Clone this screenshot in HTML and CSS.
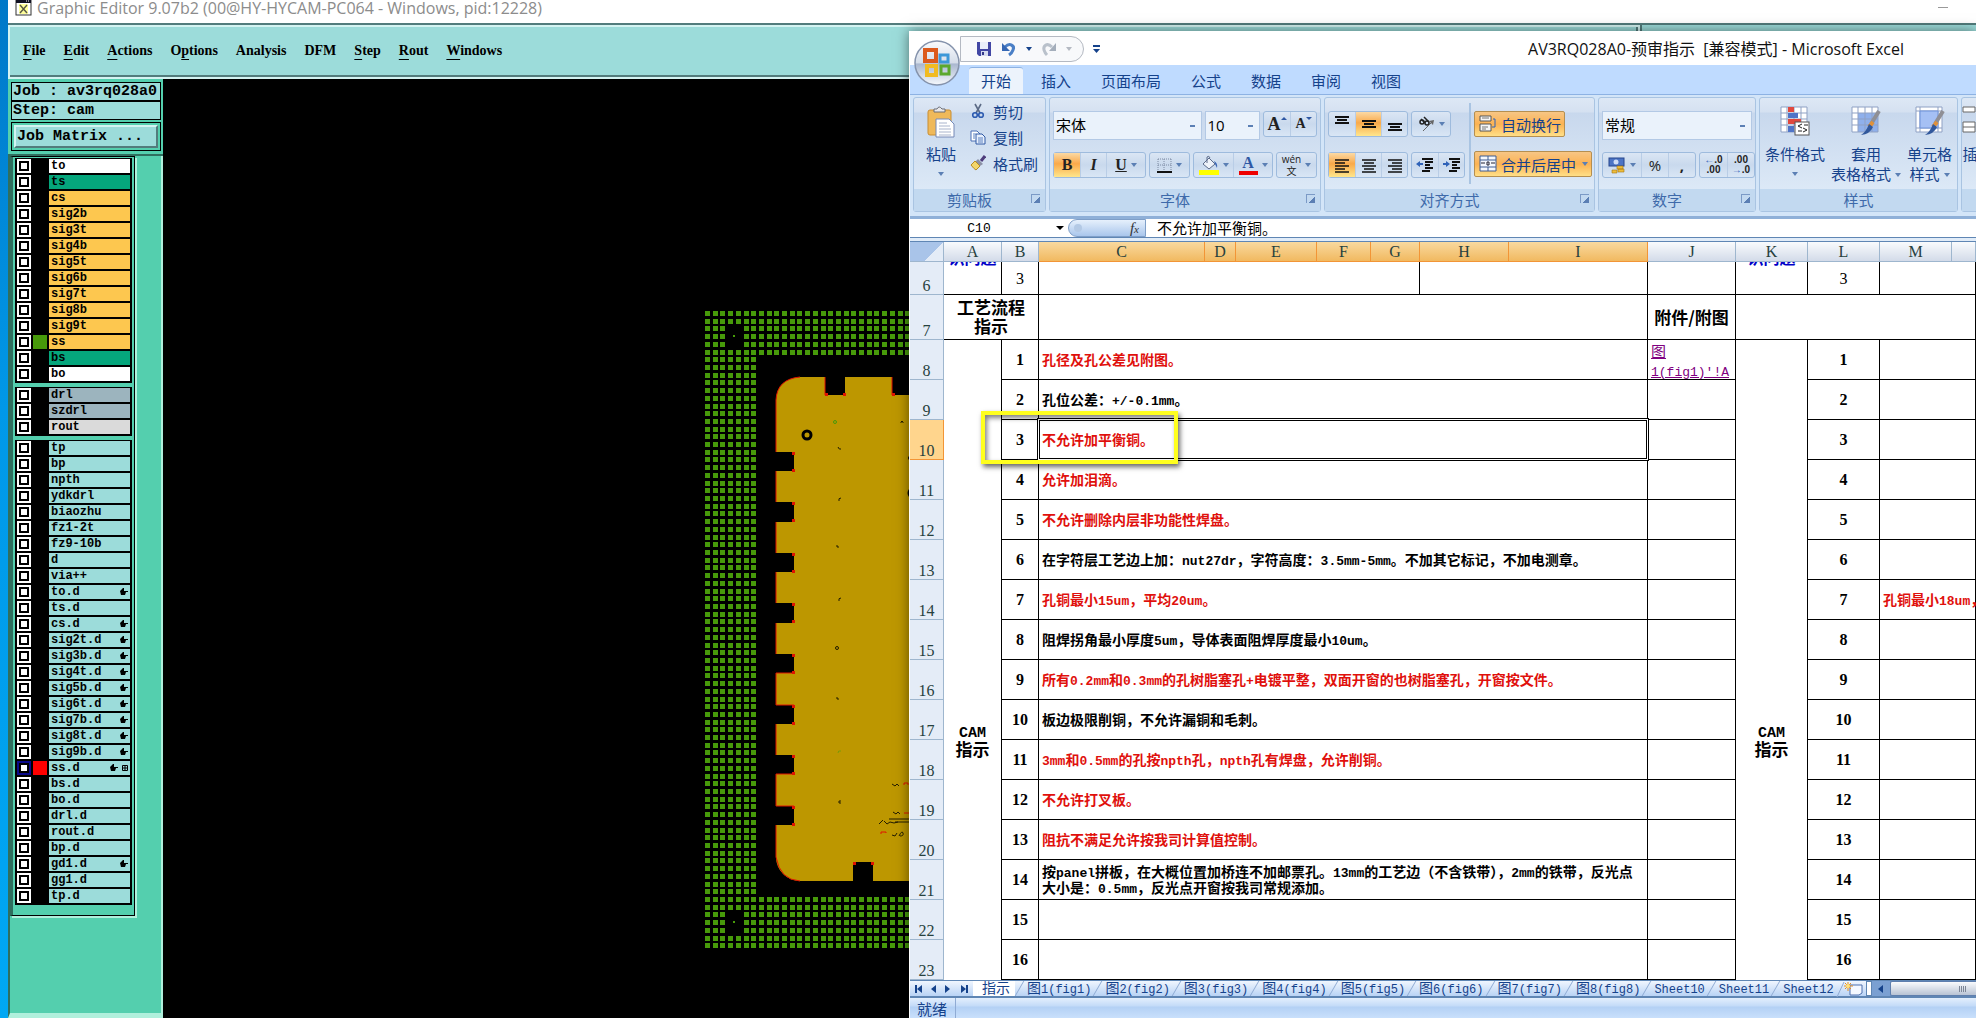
FILE: index.html
```html
<!DOCTYPE html>
<html lang="zh-CN">
<head>
  <meta charset="UTF-8" />
  <meta name="viewport" content="width=device-width, initial-scale=1.0"/>
  <title>Graphic Editor 9.07b2</title>
  <link rel="stylesheet" href="styles.css">
</head>
<body>
  <!-- Graphic editor window -->
  <div class="editor">
    <header class="editor-title">
      <svg width="17" height="16" viewBox="0 0 17 16"><rect x="1" y="0" width="15" height="15" fill="#fff" stroke="#333"/><rect x="1" y="0" width="15" height="3" fill="#112"/><path d="M11 1h1M13 1h1" stroke="#fff"/><rect x="4" y="4" width="9" height="10" fill="#ffff9c"/><path d="M5 5l7 8M12 5l-7 8" stroke="#554" stroke-width="1.4"/></svg>
      <h1>Graphic Editor 9.07b2 (00@HY-HYCAM-PC064 - Windows, pid:12228)</h1>
      <span class="minimize"></span>
    </header>
    <div class="menu-row">
      <nav class="menu">
        <a href="#"><u>F</u>ile</a>
        <a href="#"><u>E</u>dit</a>
        <a href="#"><u>A</u>ctions</a>
        <a href="#">O<u>p</u>tions</a>
        <a href="#">Analysis</a>
        <a href="#">DFM</a>
        <a href="#"><u>S</u>tep</a>
        <a href="#"><u>R</u>out</a>
        <a href="#"><u>W</u>indows</a>
      </nav>
      <div class="menu-side"></div>
    </div>
    <div class="editor-body">
      <aside class="side">
        <div class="job">
          <p>Job : av3rq028a0</p>
          <p>Step: cam</p>
          <div class="matrix-box"><button type="button">Job Matrix ...</button></div>
        </div>
        <div class="side-lower">
          <div class="layers" id="layers"></div>
        </div>
      </aside>
      <main class="canvas">
        <svg width="746" height="939" viewBox="163 79 746 939">
          <g id="pads" fill="#479a0a" shape-rendering="crispEdges"></g>
          <path fill="#bd9700" d="M800 377H825V395H845V377H892V395H909V881H873V862H853V881H800A24 24 0 0 1 776 857V825H794V806H776V774H794V755H776V724H794V705H776V673H794V654H776V623H794V603H776V572H794V553H776V522H794V502H776V471H794V452H776V400Q777 379 800 377Z"/>
          <path fill="none" stroke="#e01400" d="M800 377Q777 379 776 400V452M776 471V502M776 522V553M776 572V603M776 623V654M794 673H776V705H794M776 724V755M794 774H776V806H794M776 825V857Q780 880 800 881M825 377V395M892 377V395"/>
          <g id="corners" fill="#e01400"></g>
          <circle cx="807" cy="435" r="4" fill="#bd9700" stroke="#000" stroke-width="3"/>
          <g fill="none" stroke="#231d00">
            <path d="M901 423v-1q1-2 2 0v1M838 447q1 3 3 2M841 498q-3 0-2 3M836 546q3-1 2 2M841 598q-3 0-2 3M836 698q3-1 2 2M841 801q-3-1-2 2h2"/>
            <circle cx="835" cy="422" r="1.500" stroke="#479a0a"/>
            <circle cx="837" cy="648" r="1.500"/>
            <path d="M838 753q0-3 3-2" stroke="#7a9a0a"/>
            <path d="M892 784l3 2 2-2 2 2M893 812l3 2 2-2 2 2M879 824l4-4M884 821l3 3 3-2 4 1 4-1M889 819h20M895 822h14M892 835l3 1 2-3M899 836q3-6 4-3t-3 3"/>
            <path d="M904 785v-2h4v2M904 813h5M881 834v-2h5v1" stroke="#e01400"/>
          </g>
          <path d="M909 456q-2 2 0 4M909 489q-3 4 0 8" fill="#000"/>
        </svg>
      </main>
    </div>
  </div>

  <!-- Excel window -->
  <div class="excel">
    <button type="button" class="office" aria-label="Office">
      <svg width="46" height="46" viewBox="0 0 46 46">
        <defs><linearGradient id="orb" x1="0" y1="0" x2="0" y2="1"><stop offset="0" stop-color="#fafbfd"/><stop offset=".5" stop-color="#d5dde9"/><stop offset=".52" stop-color="#a9b7cf"/><stop offset="1" stop-color="#f6f9fd"/></linearGradient></defs>
        <circle cx="23" cy="23" r="22" fill="url(#orb)" stroke="#8593ac" stroke-width="1.500"/>
        <g fill="none" stroke-width="4">
          <rect x="11" y="10" width="11" height="11" stroke="#dc5a1d"/>
          <rect x="26" y="15" width="8" height="7" stroke="#3d98d8" stroke-width="3"/>
          <rect x="13" y="26" width="9" height="9" stroke="#f1bb22"/>
          <rect x="27" y="26" width="8" height="8" stroke="#5ba82d" stroke-width="3"/>
        </g>
      </svg>
    </button>
    <div class="excel-title">
      <div class="quick">
        <button type="button" aria-label="保存"><svg width="16" height="16"><path d="M1 1h14v14H3L1 13z" fill="#4247a4"/><path d="M4 1h8v7H4z" fill="#e9eef9"/><path d="M5 10h7v5H5z" fill="#d4dbef"/><path d="M6 11h2v3H6z" fill="#33388a"/></svg></button>
        <button type="button" aria-label="撤消"><svg width="16" height="16"><path d="M4 6C9 1 14 5 12 9q-1 3-4 5" fill="none" stroke="#4a7fc6" stroke-width="3"/><path d="M1 2v8h8z" fill="#3567b4"/></svg></button>
        <i class="arrow"></i>
        <button type="button" aria-label="恢复"><svg width="16" height="16"><path d="M11 6C6 1 2 5 3 9q1 3 3 5" fill="none" stroke="#b9c1cb" stroke-width="3"/><path d="M15 2v8H8z" fill="#a4aebb"/></svg></button>
        <i class="arrow pale"></i>
      </div>
      <svg class="more" width="9" height="10"><path d="M1 1h7v2H1zM1 5h7L4.500 9z" fill="#15428b"/></svg>
      <h2>AV3RQ028A0-预审指示&nbsp; [兼容模式] - Microsoft Excel</h2>
    </div>
    <nav class="tabs">
      <a href="#" class="active">开始</a>
      <a href="#">插入</a>
      <a href="#">页面布局</a>
      <a href="#">公式</a>
      <a href="#">数据</a>
      <a href="#">审阅</a>
      <a href="#">视图</a>
    </nav>

    <div class="ribbon">
      <section class="group clipboard">
        <div class="group-body">
          <button type="button" class="big">
            <svg width="30" height="32" viewBox="0 0 30 32"><rect x="2" y="4" width="23" height="25" rx="2" fill="#efb95a" stroke="#c98d31"/><path d="M8 6V3h3q2-4 5 0h3v3z" fill="#e8e8ea" stroke="#6b6d75"/><path d="M10 13h13l5 5v13H10z" fill="#fff" stroke="#7488b6"/><path d="M13 17h8M13 20h11M13 23h12M13 26h12M13 29h12" stroke="#a9b4cc"/></svg>
            <span>粘贴</span><i class="arrow"></i>
          </button>
          <div class="clip-list">
            <button type="button"><svg width="16" height="16"><path d="M5 1l5 9M11 1L6 10" stroke="#5c6b86" stroke-width="1.600"/><circle cx="5" cy="12" r="2.300" fill="none" stroke="#2d5bb0" stroke-width="1.600"/><circle cx="11" cy="12" r="2.300" fill="none" stroke="#2d5bb0" stroke-width="1.600"/></svg>剪切</button>
            <button type="button"><svg width="16" height="16"><path d="M1 2h6l3 3v7H1z" fill="#fff" stroke="#4a6fb4"/><path d="M6 5h6l3 3v7H6z" fill="#e7effc" stroke="#2f58a4"/><path d="M8 9h5M8 11h5M8 13h5M3 5h3M3 7h2M3 9h2" stroke="#5a80c0"/></svg>复制</button>
            <button type="button"><svg width="16" height="16"><path d="M15 1l-4 5" stroke="#4e3d7c" stroke-width="3"/><path d="M8 4l5 5-3 2-5-4z" fill="#8c91a6"/><path d="M5 6l5 5-4 4q-2-1-5-5z" fill="#f3d66b" stroke="#b98d22"/></svg>格式刷</button>
          </div>
        </div>
        <footer>剪贴板<i class="launch"></i></footer>
      </section>

      <section class="group font">
        <div class="group-body rows">
          <div class="row">
            <select class="combo wide" aria-label="字体"><option>宋体</option></select>
            <select class="combo size" aria-label="字号"><option>10</option></select>
            <div class="btns push">
              <button type="button" class="serif big-a">A<i class="tip up"></i></button><button type="button" class="serif small-a">A<i class="tip"></i></button>
            </div>
          </div>
          <div class="row">
            <div class="btns">
              <button type="button" class="serif on">B</button><button type="button" class="serif"><em>I</em></button><button type="button" class="serif w38"><u>U</u><i class="arrow"></i></button>
            </div>
            <div class="btns">
              <button type="button" class="w38" aria-label="边框"><svg width="15" height="15"><path d="M1 1h13M1 7h13M1 1v13M7 1v13M14 1v13" stroke="#7c8aa3" stroke-dasharray="1 1"/><path d="M0 14h15" stroke="#111" stroke-width="2"/></svg><i class="arrow"></i></button>
            </div>
            <div class="btns">
              <button type="button" class="w38" aria-label="填充颜色"><svg width="20" height="20"><path d="M4 9l6-6 6 6-6 5z" fill="#eef2f9" stroke="#5c6b8a"/><path d="M8 8V2q2-2 3 1" fill="none" stroke="#5c6b8a"/><path d="M15 6q4 2 3 7l-2-4z" fill="#3b66b5"/><path d="M0 15h20v5H0z" fill="#ff0"/></svg><i class="arrow"></i></button><button type="button" class="w38 serif fontcolor"><b>A</b><i class="arrow"></i></button>
            </div>
            <div class="btns">
              <button type="button" class="w38 wen"><span>wén<br>文</span><i class="arrow"></i></button>
            </div>
          </div>
        </div>
        <footer>字体<i class="launch"></i></footer>
      </section>

      <section class="group align">
        <div class="group-body">
          <div class="rows">
            <div class="row">
              <div class="btns">
                <button type="button" aria-label="顶端对齐"><svg width="16" height="18"><path d="M1 2h14M3 5h10M1 8h14" stroke="#111" stroke-width="2"/></svg></button><button type="button" class="on" aria-label="垂直居中"><svg width="16" height="18"><path d="M1 6h14M3 9h10M1 12h14" stroke="#111" stroke-width="2"/></svg></button><button type="button" aria-label="底端对齐"><svg width="16" height="18"><path d="M1 9h14M3 12h10M1 15h14" stroke="#111" stroke-width="2"/></svg></button>
              </div>
              <div class="btns">
                <button type="button" class="w38" aria-label="方向"><svg width="18" height="18"><g fill="none" stroke="#222" stroke-width="1.500"><circle cx="5" cy="7" r="2"/><path d="M4 4l4 4M7 2l5 5"/><circle cx="10" cy="8" r="2"/></g><path d="M6 16l9-9" stroke="#666"/><path d="M17 5l-5 1 4 4z" fill="#666"/></svg><i class="arrow"></i></button>
              </div>
            </div>
            <div class="row">
              <div class="btns">
                <button type="button" class="on" aria-label="左对齐"><svg width="16" height="16"><path d="M1 3h14M1 6h10M1 9h14M1 12h10M1 15h14" stroke="#111" stroke-width="1.500"/></svg></button><button type="button" aria-label="居中"><svg width="16" height="16"><path d="M1 3h14M3 6h10M1 9h14M3 12h10M1 15h14" stroke="#111" stroke-width="1.500"/></svg></button><button type="button" aria-label="右对齐"><svg width="16" height="16"><path d="M1 3h14M5 6h10M1 9h14M5 12h10M1 15h14" stroke="#111" stroke-width="1.500"/></svg></button>
              </div>
              <div class="btns">
                <button type="button" aria-label="减少缩进量"><svg width="18" height="16"><path d="M6 2h11M9 5h8M9 8h5M9 11h8M6 14h8" stroke="#111" stroke-width="2"/><path d="M0 7l4-3v2h3v2H4v2z" fill="#2f62b8"/></svg></button><button type="button" aria-label="增加缩进量"><svg width="18" height="16"><path d="M6 2h11M9 5h8M9 8h5M9 11h8M6 14h8" stroke="#111" stroke-width="2"/><path d="M7 7L3 4v2H0v2h3v2z" fill="#2f62b8"/></svg></button>
              </div>
            </div>
          </div>
          <div class="rows wrap-rows">
            <button type="button" class="toggle"><svg width="18" height="18"><path d="M1 1h11v5H1zM1 9h11v7H1z" fill="#f5f5f5" stroke="#555"/><path d="M3 3h7M3 12h6M3 14h4" stroke="#777"/><path d="M14 4h2v8h-3" fill="none" stroke="#2f62b8"/></svg>自动换行</button>
            <button type="button" class="toggle merge"><svg width="18" height="18"><path d="M1 1h16v15H1zM1 5h16M1 12h16M9 1v4M9 12v4" fill="#f5f8fd" stroke="#3e5c92"/><path d="M2 8h4M12 8h4M8 7h2v3H8z" stroke="#223" fill="none"/></svg>合并后居中<i class="arrow"></i></button>
          </div>
        </div>
        <footer>对齐方式<i class="launch"></i></footer>
      </section>

      <section class="group number">
        <div class="group-body rows">
          <div class="row">
            <select class="combo wide" aria-label="数字格式"><option>常规</option></select>
          </div>
          <div class="row">
            <div class="btns">
              <button type="button" class="w38" aria-label="会计数字格式"><svg width="18" height="18"><rect x="1" y="2" width="15" height="8" fill="#4c74c4" stroke="#27468c"/><circle cx="8" cy="6" r="2.500" fill="#cfdcf5"/><path d="M9 10h6v3H9zM10 13h6v3h-6zM4 14h5v3H4z" fill="#eebd3b" stroke="#a67612" stroke-width=".6"/></svg><i class="arrow"></i></button><button type="button">%</button><button type="button" class="comma">,</button>
            </div>
            <div class="btns push">
              <button type="button" class="dec"><b>←</b>.0<br>.00</button><button type="button" class="dec">.00<br><b>→</b>.0</button>
            </div>
          </div>
        </div>
        <footer>数字<i class="launch"></i></footer>
      </section>

      <section class="group styles">
        <div class="group-body">
          <button type="button" class="big">
            <svg width="30" height="30"><path d="M1 1h26v25H1zM1 7h26M1 13h26M1 19h26M7 1v25M14 1v25M21 1v25" fill="#fff" stroke="#8fa1c4"/><path d="M8 1h6v5H8zM8 13h13v5H8z" fill="#e0483e"/><path d="M8 7h10v5H8zM8 20h6v6H8z" fill="#4f74c8"/><rect x="15" y="16" width="14" height="13" fill="#fff" stroke="#555"/><path d="M22 18l-4 2 4 2M23 22l4 2-4 2M18 25h4M24 19h4" stroke="#222" fill="none"/></svg>
            <span>条件格式</span><i class="arrow"></i>
          </button>
          <button type="button" class="big">
            <svg width="30" height="30"><path d="M1 1h26v25H1z" fill="#fff"/><path d="M7 7h20v19H7z" fill="#8fb0ec"/><path d="M1 1h26v25H1zM1 7h26M1 13h26M1 19h26M7 1v25M14 1v25M21 1v25" fill="none" stroke="#8fa1c4"/><path d="M28 5l-8 13" stroke="#8f8f95" stroke-width="4"/><path d="M22 16l-4 5" stroke="#e0913a" stroke-width="4"/><path d="M18 18l4 3q-3 7-12 8 5-3 8-11z" fill="#31589c"/></svg>
            <span>套用</span><span>表格格式<i class="arrow"></i></span>
          </button>
          <button type="button" class="big">
            <svg width="30" height="30"><path d="M1 1h26v25H1zM1 5h26M1 22h26M5 1v25M23 1v25" fill="#fff" stroke="#8fa1c4"/><path d="M5 5h18v17H5z" fill="#a5c0f4" stroke="#6f92d8"/><path d="M28 5l-8 13" stroke="#8f8f95" stroke-width="4"/><path d="M22 16l-4 5" stroke="#e0913a" stroke-width="4"/><path d="M18 18l4 3q-3 7-12 8 5-3 8-11z" fill="#31589c"/></svg>
            <span>单元格</span><span>样式<i class="arrow"></i></span>
          </button>
        </div>
        <footer>样式</footer>
      </section>

      <section class="group rest">
        <div class="group-body">
          <button type="button" class="big">
            <svg width="16" height="30"><path d="M1 1h12v5H1zM1 16h12v10H1zM1 21h12" fill="#fff" stroke="#666"/></svg>
            <span>插</span>
          </button>
        </div>
        <footer></footer>
      </section>
    </div>

    <div class="formula">
      <label class="namebox"><input type="text" value="C10" aria-label="名称框"><i class="arrow"></i></label>
      <div class="fx"><span></span><em>f<small>x</small></em></div>
      <input type="text" class="formula-text" value="不允许加平衡铜。" aria-label="编辑栏">
    </div>

    <div class="sheet">
      <table>
        <colgroup>
          <col class="c34"><col class="c58"><col class="c37"><col class="c166"><col class="c31"><col class="c81"><col class="c54"><col class="c49"><col class="c89"><col class="c139"><col class="c88"><col class="c72"><col class="c72"><col class="c72"><col>
        </colgroup>
        <thead>
          <tr><th class="all"></th><th>A</th><th>B</th><th class="sel">C</th><th class="sel">D</th><th class="sel">E</th><th class="sel">F</th><th class="sel">G</th><th class="sel">H</th><th class="sel">I</th><th>J</th><th>K</th><th>L</th><th>M</th><th></th></tr>
        </thead>
        <tbody>
          <tr class="r6"><th>6</th><td class="cut"><span>识问题</span></td><td class="plain">3</td><td colspan="5"></td><td colspan="2"></td><td></td><td class="cut"><span>识问题</span></td><td class="plain">3</td><td colspan="2"></td></tr>
          <tr class="r7"><th>7</th><td colspan="2" class="head">工艺流程<br>指示</td><td colspan="7"></td><td class="head">附件/附图</td><td colspan="4"></td></tr>
          <tr><th>8</th><td rowspan="20" class="head"><span class="cam">CAM</span><br>指示</td><td class="no">1</td><td colspan="7" class="red">孔径及孔公差见附图。</td><td class="link"><a href="#">图<br><span>1(fig1)'!A</span></a></td><td rowspan="20" class="head"><span class="cam">CAM</span><br>指示</td><td class="no">1</td><td colspan="2"></td></tr>
          <tr><th>9</th><td class="no">2</td><td colspan="7">孔位公差：<span>+/-0.1mm</span>。</td><td></td><td class="no">2</td><td colspan="2"></td></tr>
          <tr><th class="sel">10</th><td class="no">3</td><td colspan="7" class="red current">不允许加平衡铜。<div class="mark"></div></td><td></td><td class="no">3</td><td colspan="2"></td></tr>
          <tr><th>11</th><td class="no">4</td><td colspan="7" class="red">允许加泪滴。</td><td></td><td class="no">4</td><td colspan="2"></td></tr>
          <tr><th>12</th><td class="no">5</td><td colspan="7" class="red">不允许删除内层非功能性焊盘。</td><td></td><td class="no">5</td><td colspan="2"></td></tr>
          <tr><th>13</th><td class="no">6</td><td colspan="7">在字符层工艺边上加：<span>nut27dr</span>，字符高度：<span>3.5mm-5mm</span>。不加其它标记，不加电测章。</td><td></td><td class="no">6</td><td colspan="2"></td></tr>
          <tr><th>14</th><td class="no">7</td><td colspan="7" class="red">孔铜最小<span>15um</span>，平均<span>20um</span>。</td><td></td><td class="no">7</td><td colspan="2" class="red">孔铜最小<span>18um</span>，</td></tr>
          <tr><th>15</th><td class="no">8</td><td colspan="7">阻焊拐角最小厚度<span>5um</span>，导体表面阻焊厚度最小<span>10um</span>。</td><td></td><td class="no">8</td><td colspan="2"></td></tr>
          <tr><th>16</th><td class="no">9</td><td colspan="7" class="red">所有<span>0.2mm</span>和<span>0.3mm</span>的孔树脂塞孔<span>+</span>电镀平整，双面开窗的也树脂塞孔，开窗按文件。</td><td></td><td class="no">9</td><td colspan="2"></td></tr>
          <tr><th>17</th><td class="no">10</td><td colspan="7">板边极限削铜，不允许漏铜和毛刺。</td><td></td><td class="no">10</td><td colspan="2"></td></tr>
          <tr><th>18</th><td class="no">11</td><td colspan="7" class="red"><span>3mm</span>和<span>0.5mm</span>的孔按<span>npth</span>孔，<span>npth</span>孔有焊盘，允许削铜。</td><td></td><td class="no">11</td><td colspan="2"></td></tr>
          <tr><th>19</th><td class="no">12</td><td colspan="7" class="red">不允许打叉板。</td><td></td><td class="no">12</td><td colspan="2"></td></tr>
          <tr><th>20</th><td class="no">13</td><td colspan="7" class="red">阻抗不满足允许按我司计算值控制。</td><td></td><td class="no">13</td><td colspan="2"></td></tr>
          <tr><th>21</th><td class="no">14</td><td colspan="7">按<span>panel</span>拼板，在大概位置加桥连不加邮票孔。<span>13mm</span>的工艺边（不含铁带），<span>2mm</span>的铁带，反光点<br>大小是：<span>0.5mm</span>，反光点开窗按我司常规添加。</td><td></td><td class="no">14</td><td colspan="2"></td></tr>
          <tr><th>22</th><td class="no">15</td><td colspan="7"></td><td></td><td class="no">15</td><td colspan="2"></td></tr>
          <tr><th>23</th><td class="no">16</td><td colspan="7"></td><td></td><td class="no">16</td><td colspan="2"></td></tr>
          <!-- the merged CAM cells run on below the visible rows -->
          <tr><th></th><td></td><td colspan="7"></td><td></td><td></td><td colspan="2"></td></tr>
          <tr><th></th><td></td><td colspan="7"></td><td></td><td></td><td colspan="2"></td></tr>
          <tr><th></th><td></td><td colspan="7"></td><td></td><td></td><td colspan="2"></td></tr>
          <tr><th></th><td></td><td colspan="7"></td><td></td><td></td><td colspan="2"></td></tr>
        </tbody>
      </table>
    </div>

    <div class="sheet-tabs">
      <svg class="nav" width="63" height="16"><path d="M6 4v8M57 4v8" stroke="#15428b" stroke-width="2"/><path d="M12 4v8L7 8zM26 4v8l-5-4zM35 4v8l5-4zM51 4v8l5-4z" fill="#15428b"/></svg>
      <a href="#" class="active">指示</a>
      <a href="#">图<span>1(fig1)</span></a>
      <a href="#">图<span>2(fig2)</span></a>
      <a href="#">图<span>3(fig3)</span></a>
      <a href="#">图<span>4(fig4)</span></a>
      <a href="#">图<span>5(fig5)</span></a>
      <a href="#">图<span>6(fig6)</span></a>
      <a href="#">图<span>7(fig7)</span></a>
      <a href="#">图<span>8(fig8)</span></a>
      <a href="#"><span>Sheet10</span></a>
      <a href="#"><span>Sheet11</span></a>
      <a href="#"><span>Sheet12</span></a>
      <svg class="new-sheet" width="30" height="16"><path d="M1 16L8 1" stroke="#8fabd4"/><path d="M14 4h12v8l-3 2h-9z" fill="#f4f8ff" stroke="#4d6fae"/><path d="M12 1v9M8 5h9M9 2l6 6M15 2L9 8" stroke="#e58d1d"/><circle cx="12" cy="5" r="2" fill="#ffe27a"/></svg>
      <div class="hscroll"><i class="split"></i><i class="left"></i><i class="thumb"><b></b></i></div>
    </div>
    <footer class="status"><span>就绪</span></footer>
  </div>

  <script>
    // layer groups: name, label background, optional swatch, optional marks
    const groups = [
      [["to", "white"], ["ts", "green"], ["cs", "amber"], ["sig2b", "amber"], ["sig3t", "amber"], ["sig4b", "amber"],
       ["sig5t", "amber"], ["sig6b", "amber"], ["sig7t", "amber"], ["sig8b", "amber"], ["sig9t", "amber"],
       ["ss", "amber", "on-green"], ["bs", "green"], ["bo", "white"]],
      [["drl", "steel"], ["szdrl", "steel"], ["rout", "grey"]],
      [["tp"], ["bp"], ["npth"], ["ydkdrl"], ["biaozhu"], ["fz1-2t"], ["fz9-10b"], ["d"], ["via++"],
       ["to.d", "", "", "h"], ["ts.d"], ["cs.d", "", "", "h"], ["sig2t.d", "", "", "h"], ["sig3b.d", "", "", "h"],
       ["sig4t.d", "", "", "h"], ["sig5b.d", "", "", "h"], ["sig6t.d", "", "", "h"], ["sig7b.d", "", "", "h"],
       ["sig8t.d", "", "", "h"], ["sig9b.d", "", "", "h"], ["ss.d", "", "on-red", "hg"], ["bs.d"], ["bo.d"],
       ["drl.d"], ["rout.d"], ["bp.d"], ["gd1.d", "", "", "h"], ["gg1.d"], ["tp.d"]]
    ];
    const hand = '<svg width="8" height="8"><path d="M0 3L3 0H4V3H8V4H6L5 7H1Z"/></svg>';
    const grid = '<svg width="6" height="6"><path d="M.5 .5h5v5h-5zM3 0v6M0 3h6" fill="none" stroke="#000"/></svg>';

    document.getElementById("layers").innerHTML = groups.map(rows =>
      '<div class="layer-group">' + rows.map(([name, tone = "", swatch = "", marks = ""]) =>
        `<label class="layer"><input type="checkbox" ${swatch === "on-red" ? "checked" : ""}>` +
        `<i class="${swatch}"></i><span class="${tone}">${name}` +
        `<b>${marks.includes("h") ? hand : ""}${marks.includes("g") ? grid : ""}</b></span></label>`
      ).join("") + "</div>").join("");

    // copper pads round the panel edge, left open at the two tooling holes
    let pads = "";
    for (let r = 0; r < 83; r++) {
      for (let c = 0; c < 27; c++) {
        const frame = c < 7 || r < 6 || r > 75;
        const hole = (c === 3 || c === 4) && ((r > 1 && r < 5) || (r > 77 && r < 81));
        if (!frame || hole) continue;
        pads += `<rect x="${Math.round(705 + c * 7.7)}" y="${Math.round(311 + r * 7.71)}" width="5" height="5"/>`;
      }
    }
    pads += '<rect x="733" y="335" width="2" height="2"/><rect x="733" y="921" width="2" height="2"/>';
    document.getElementById("pads").innerHTML = pads;

    const corners = [[826, 394], [844, 394], [893, 394], [854, 863], [872, 863]];
    [452, 502, 553, 603, 654, 705, 755, 806].forEach(y => corners.push([793, y + 1], [793, y + 18]));
    document.getElementById("corners").innerHTML =
      corners.map(([x, y]) => `<rect x="${x - 1}" y="${y - 1}" width="3" height="3"/>`).join("");
  </script>
</body>
</html>
```
FILE: styles.css
```css
* {
  box-sizing: border-box;
  margin: 0;
  padding: 0;
}
body {
  position: relative;
  height: 100vh;
  overflow: hidden;
  padding-left: 8px;
  background: linear-gradient(#0078c8, #0098e8 40%, #00a8f4);
  font-family: "Open Sans", "Noto Sans CJK SC", sans-serif;
  font-size: 15px;
}
button {
  border: 0;
  background: none;
  font: inherit;
  color: inherit;
}
a {
  color: inherit;
  text-decoration: none;
}
svg {
  display: block;
  flex: none;
}

/* Graphic editor */
.editor {
  display: flex;
  flex-direction: column;
  height: 100%;
  background: #000;
}
.editor-title {
  display: flex;
  align-items: flex-start;
  gap: 5px;
  height: 23px;
  padding: 0 18px 0 7px;
  background: #fff;
}
.editor-title h1 {
  font-size: 16px;
  line-height: 16px;
  font-weight: normal;
  color: #8c8c8c;
}
.minimize {
  width: 10px;
  height: 1px;
  margin: 7px 10px 0 auto;
  background: #999;
}
.menu-row {
  display: flex;
  height: 56px;
  border-top: 2px solid #527c7c;
  background: #000;
}
.menu {
  flex: 0 0 1632px;
  display: flex;
  align-items: center;
  gap: 18px;
  padding: 0 0 3px 13px;
  border: 2px solid #d4f4f2;
  box-shadow: inset -2px -2px #527c7c;
  background: #9cdcda;
  font: bold 14px/20px "Liberation Serif", serif;
}
.menu u {
  text-underline-offset: 4px;
}
.menu-side {
  flex: 1;
  border-left: 2px solid #527c7c;
  background: #9cdcda;
}
.editor-body {
  flex: 1;
  display: flex;
  min-height: 0;
}
.side {
  flex: 0 0 155px;
  display: flex;
  flex-direction: column;
  background: #54cfae;
  font: bold 15px/17px "Liberation Mono", monospace;
}
.job {
  padding: 3px 2px 3px 3px;
  border-bottom: 2px solid #2f6f5f;
}
.job p {
  height: 19px;
  padding-left: 1px;
  border: 1px solid #000;
  background: #9cdcda;
}
.matrix-box {
  margin-top: 2px;
  padding: 2px;
  border: 1px solid #000;
}
.matrix-box button {
  display: block;
  width: 100%;
  height: 23px;
  padding-left: 1px;
  border: 2px solid;
  border-color: #d4f4f2 #527c7c #527c7c #d4f4f2;
  background: #9cdcda;
  text-align: left;
}
.side-lower {
  flex: 1;
  padding-right: 26px;
  border-left: 2px solid #2f6f5f;
  border-right: 2px solid #b0f0dc;
  border-bottom: 5px solid #b0f0dc;
}
.layers {
  display: flex;
  flex-direction: column;
  gap: 4px;
  padding: 1px 2px 10px;
  border: 1px solid #000;
  border-left: 3px solid #2f6f5f;
  box-shadow: 2px 2px #b0f0dc;
}
.layer-group {
  padding: 1px 2px 0;
  background: #000;
}
.layer {
  display: flex;
  gap: 2px;
  height: 16px;
}
.layer input {
  appearance: none;
  width: 14px;
  height: 14px;
  border: 2px solid #fff;
  background: #fff;
  box-shadow: inset 0 0 0 2px #000;
}
.layer input:checked {
  border-color: #0a0a8c;
}
.layer i {
  width: 14px;
  height: 14px;
}
.on-green {
  background: #479a0a;
}
.on-red {
  background: #f00;
}
.layer span {
  flex: 1;
  display: flex;
  justify-content: space-between;
  height: 14px;
  padding-left: 2px;
  background: #9cdcda;
  font-size: 12px;
  line-height: 14px;
}
.layer b {
  display: flex;
  align-items: center;
  gap: 4px;
  padding-right: 2px;
}
.layer .white {
  background: #fff;
}
.layer .green {
  background: #05a67c;
}
.layer .amber {
  background: #fdc74f;
}
.layer .steel {
  background: #9cb4be;
}
.layer .grey {
  background: #dadada;
}
.canvas {
  flex: 1;
  overflow: hidden;
}

/* Excel window floats over the editor */
.excel {
  position: absolute;
  left: 909px;
  top: 31px;
  right: 0;
  bottom: 0;
  display: flex;
  flex-direction: column;
  border-left: 1px solid #fff;
  background: #fff;
  box-shadow: 0 0 12px rgba(0, 0, 0, 0.5);
  color: #15428b;
}
.office {
  position: absolute;
  left: 4px;
  top: 9px;
}
.excel-title {
  display: flex;
  align-items: center;
  height: 34px;
  padding: 2px 72px 0 50px;
}
.quick {
  display: flex;
  align-items: center;
  gap: 9px;
  height: 26px;
  padding: 0 11px 0 15px;
  border: 1px solid #b4b9c2;
  border-radius: 0 13px 13px 0;
  background: #f8f9fb;
}
.arrow {
  flex: none;
  display: inline-block;
  border: 3px solid transparent;
  border-top: 4px solid #5b7fb4;
  border-bottom: 0;
}
.quick .arrow {
  border-top-color: #15428b;
}
.quick .pale {
  border-top-color: #b4b9c2;
}
.more {
  margin-left: 8px;
}
.excel-title h2 {
  margin-left: auto;
  font-size: 16px;
  line-height: 22px;
  font-weight: normal;
  color: #111;
}
.tabs {
  display: flex;
  height: 29px;
  padding: 2px 0 0 56px;
  background: #bfdbff;
}
.tabs a {
  margin: 0 3px;
  padding: 0 12px;
  border: 1px solid transparent;
  border-width: 1px 0 0;
  line-height: 26px;
}
.tabs .active {
  border-color: #8db2e3;
  border-radius: 3px 3px 0 0;
  background: #ecf3fc;
}

.ribbon {
  display: flex;
  gap: 3px;
  height: 125px;
  padding: 2px 0 4px 3px;
  overflow: hidden;
  border-top: 1px solid #8db2e3;
  border-bottom: 3px solid #8fb0d8;
  background: #d3e5f8;
}
.group {
  flex: none;
  display: flex;
  flex-direction: column;
  border: 1px solid #a9c4e2;
  border-radius: 3px;
  background: linear-gradient(#dde8f5, #d5e1f1 14px, #c8d8ed 15px, #d9e6f5 80px, #e2eefb);
}
.clipboard {
  width: 133px;
}
.font {
  width: 272px;
}
.align {
  width: 271px;
}
.number {
  width: 158px;
}
.styles {
  width: 199px;
}
.rest {
  flex: 1;
}
.group footer {
  position: relative;
  height: 22px;
  padding-right: 20px;
  background: #c2d9f0;
  line-height: 23px;
  text-align: center;
  color: #3e6aaa;
}
.group.styles footer {
  padding-right: 0;
}
.launch {
  position: absolute;
  right: 5px;
  top: 5px;
  width: 9px;
  height: 9px;
  border: 1px solid #7b9ac6;
  border-width: 1px 0 0 1px;
  background: linear-gradient(135deg, transparent 60%, #5b7fb4 60%);
}
.group-body {
  flex: 1;
  display: flex;
}
.rows {
  display: flex;
  flex-direction: column;
  gap: 13px;
  padding: 13px 3px 0;
}
.row {
  display: flex;
  gap: 3px;
  height: 28px;
  align-items: flex-start;
}
.big {
  display: flex;
  flex-direction: column;
  align-items: center;
  padding-top: 8px;
  line-height: 20px;
  white-space: nowrap;
}
.big svg {
  margin-bottom: 8px;
}
.big > .arrow {
  margin-top: 8px;
}
.big span .arrow {
  margin: 0 0 3px 4px;
}
.clipboard .big {
  width: 54px;
}
.clipboard .big svg {
  margin-bottom: 6px;
}
.clip-list button {
  display: flex;
  align-items: center;
  gap: 7px;
  height: 26px;
}
.clip-list {
  padding-left: 2px;
}
.combo {
  appearance: none;
  height: 29px;
  padding: 0 0 2px 2px;
  border: 1px solid #b3c9e5;
  background: #eaf2fb linear-gradient(#5b7fb4, #5b7fb4) right 6px center / 5px 2px no-repeat;
  font: inherit;
  color: #000;
}
.wide {
  width: 150px;
}
.size {
  width: 56px;
}
.btns {
  display: flex;
  height: 26px;
  border: 1px solid #9ebbdd;
  border-radius: 3px;
  background: linear-gradient(#dbe6f4, #c9d9ed 50%, #d9e6f5);
}
.btns button {
  display: flex;
  align-items: center;
  justify-content: center;
  gap: 4px;
  width: 26px;
  border-left: 1px solid #b9cde6;
  color: #222;
}
.btns button:first-child {
  border-left: 0;
}
.btns .w38 {
  width: 38px;
}
.push {
  margin-left: auto;
}
.btns .on {
  background: linear-gradient(#fbd9a4, #f9a94a 45%, #ffe68c);
}
.serif {
  font: bold 16px/16px "Liberation Serif", serif;
}
.tip {
  align-self: flex-start;
  margin: 5px 0 0 -4px;
  border: 3px solid transparent;
  border-top-color: #2f58a4;
  border-bottom: 0;
}
.up {
  transform: rotate(180deg);
}
.btns .big-a {
  font-size: 18px;
}
.btns .small-a {
  font-size: 14px;
}
.font .row .btns .w38 {
  width: 39px;
}
.fontcolor b {
  width: 19px;
  border-bottom: 4px solid #e00;
  color: #2f58a4;
}
.wen span {
  font-size: 10px;
  line-height: 12px;
}
.comma {
  font-weight: bold;
}
.number .btns button {
  width: 27px;
}
.number .btns .w38 {
  width: 38px;
}
.btns .dec {
  display: block;
  font: bold 10px/10px "Liberation Sans", sans-serif;
}
.dec b {
  color: #2f62b8;
}
.wrap-rows {
  gap: 14px;
  margin: 5px 0 5px 1px;
  padding: 8px 0 0 3px;
  border-left: 2px solid #a9c4e2;
}
.toggle {
  align-self: flex-start;
  display: flex;
  align-items: center;
  gap: 4px;
  height: 26px;
  padding: 0 3px 0 4px;
  border: 1px solid #b58f50;
  border-radius: 2px;
  background: linear-gradient(#f7c685, #fbb253 50%, #ffdf87);
  white-space: nowrap;
}
.merge .arrow {
  margin-left: 2px;
}
.styles .group-body {
  gap: 6px;
  padding-left: 5px;
}

.formula {
  display: flex;
  height: 22px;
  padding-bottom: 4px;
  background: linear-gradient(#fff 18px, #5f86b4 18px, #5f86b4 19px, #e1ecf8 19px);
}
.formula input {
  border: 0;
  background: none;
}
.namebox {
  display: flex;
  align-items: center;
  width: 154px;
}
.namebox input {
  flex: 1;
  width: 100px;
  padding: 2px 8px 0 0;
  font: 13px/18px "Liberation Mono", monospace;
  text-align: center;
}
.namebox .arrow {
  border-width: 4px 4px 0;
  border-top-color: #000;
}
.fx {
  display: flex;
  align-items: center;
  justify-content: space-between;
  width: 78px;
  margin-left: 4px;
  padding: 0 6px 0 5px;
  border: 1px solid #7f9fc8;
  border-radius: 9px 0 0 9px;
  background: linear-gradient(#e6f0fc, #a9c6ec);
  font: 15px/16px "Liberation Serif", serif;
  color: #333;
}
.fx span {
  width: 8px;
  height: 8px;
  border-radius: 50%;
  background: #b3c9e5;
}
.fx small {
  font-size: 11px;
}
.formula-text {
  flex: 1;
  padding-left: 11px;
  font: 15px/18px "Noto Sans CJK SC", sans-serif;
}

/* Sheet */
.sheet {
  flex: 1;
  min-height: 0;
  overflow: hidden;
  border-top: 1px solid #5f86b4;
}
.sheet table {
  width: 100%;
  table-layout: fixed;
  border-collapse: separate;
  border-spacing: 0;
}
.c34 { width: 34px; }
.c58 { width: 58px; }
.c37 { width: 37px; }
.c166 { width: 166px; }
.c31 { width: 31px; }
.c81 { width: 81px; }
.c54 { width: 54px; }
.c49 { width: 49px; }
.c89 { width: 89px; }
.c139 { width: 139px; }
.c88 { width: 88px; }
.c72 { width: 72px; }
.sheet th {
  border: 1px solid #9eb6ce;
  border-width: 0 1px 1px 0;
  background: #e4ecf7;
  font: 16px/16px "Liberation Serif", serif;
  color: #27413e;
  vertical-align: bottom;
}
.sheet thead th {
  height: 20px;
  padding-bottom: 1px;
  background: linear-gradient(#f9fbfd, #d3dbe9);
}
.sheet thead .all {
  background: linear-gradient(135deg, #a9c4e9 65%, #e4ecf7 65%);
}
.sheet thead .sel {
  border-color: #f29536;
  background: linear-gradient(#f9d99f, #f1b960);
}
.sheet tbody .sel {
  border-color: #f29536;
  background: #ffd58d;
}
.sheet td {
  height: 40px;
  padding: 0 3px 2px;
  border: 1px solid #000;
  border-width: 0 1px 1px 0;
  font-size: 14px;
  line-height: 16px;
  font-weight: bold;
  font-family: "Noto Sans CJK SC", sans-serif;
  color: #000;
  white-space: nowrap;
}
/* latin runs must not push the line box taller */
.sheet td span {
  font: bold 13px/1px "Liberation Mono", monospace;
}
.sheet .r6 td {
  height: 33px;
}
.sheet .r7 td {
  height: 45px;
}
.sheet .red {
  color: #e0100c;
}
.sheet .no,
.sheet .plain {
  padding: 1px 0 0;
  text-align: center;
  font: bold 16px/16px "Liberation Serif", serif;
}
.sheet .plain {
  font-weight: normal;
}
.sheet .head {
  padding: 0 0 2px;
  text-align: center;
  font-size: 17px;
  line-height: 19px;
}
.sheet .head .cam {
  font-size: 15px;
}
.sheet .cut {
  vertical-align: top;
  text-align: center;
}
.sheet .cut span {
  display: flex;
  align-items: flex-end;
  justify-content: center;
  height: 4px;
  overflow: hidden;
  font: bold 16px/17px "Noto Sans CJK SC", sans-serif;
  color: #0000c8;
}
.sheet .link {
  padding-bottom: 0;
  font-size: 15px;
  line-height: 19px;
}
.sheet .link,
.sheet .link span {
  font-weight: normal;
}
.link a {
  color: #800080;
  text-decoration: underline;
}
.current {
  position: relative;
}
.current::after {
  content: "";
  position: absolute;
  inset: -1px;
  border: 1px solid #fff;
  box-shadow: 0 0 0 1px #000, inset 0 0 0 1px #000;
}
.mark {
  position: absolute;
  z-index: 1;
  left: -58px;
  top: -9px;
  width: 197px;
  height: 53px;
  border: 4px solid #ffff1e;
  box-shadow: 2px 3px 5px rgba(0, 0, 0, 0.6), inset 2px 3px 5px rgba(0, 0, 0, 0.5);
}

.sheet-tabs {
  display: flex;
  height: 18px;
  border-top: 1px solid #5f86b4;
  border-bottom: 2px solid #5f86b4;
  background: linear-gradient(#f0f6fe, #b9d3f5);
}
.sheet-tabs a {
  position: relative;
  padding: 0 2px 0 12px;
  font: 14px/13px "Noto Sans CJK SC", sans-serif;
  white-space: nowrap;
}
.sheet-tabs a::before {
  content: "";
  position: absolute;
  left: 4px;
  top: 0;
  height: 15px;
  border-left: 1px solid #8fabd4;
  transform: skewX(-30deg);
}
.sheet-tabs a span {
  font: 12px/13px "Liberation Mono", monospace;
}
.sheet-tabs .active {
  padding: 0 5px 0 9px;
  background: #fff;
}
.sheet-tabs .active::before {
  display: none;
}
.hscroll {
  flex: 1;
  display: flex;
  background: #7ba0d2;
}
.split {
  width: 6px;
  border: 1px solid #5f86b4;
  background: #fff;
}
.left {
  width: 5px;
  margin: 4px 7px 0 6px;
  border: 4px solid transparent;
  border-right: 5px solid #15428b;
  border-left: 0;
  height: 8px;
}
.thumb {
  flex: 1;
  padding: 4px 9px 0 0;
  border: 1px solid #5f7fae;
  border-right: 0;
  border-radius: 2px 0 0 2px;
  background: linear-gradient(#fafbfd, #b8c3d4);
}
.thumb b {
  display: block;
  width: 8px;
  height: 6px;
  margin-left: auto;
  background: repeating-linear-gradient(90deg, #7c8696 0 1px, transparent 1px 2px);
}
.status {
  display: flex;
  height: 20px;
  background: linear-gradient(#e3effd, #c3dbf8 40%, #b3d0f5 45%, #c9e0fb);
}
.status span {
  padding: 0 8px 0 7px;
  border-right: 1px solid #8fabd4;
  line-height: 23px;
}
```
